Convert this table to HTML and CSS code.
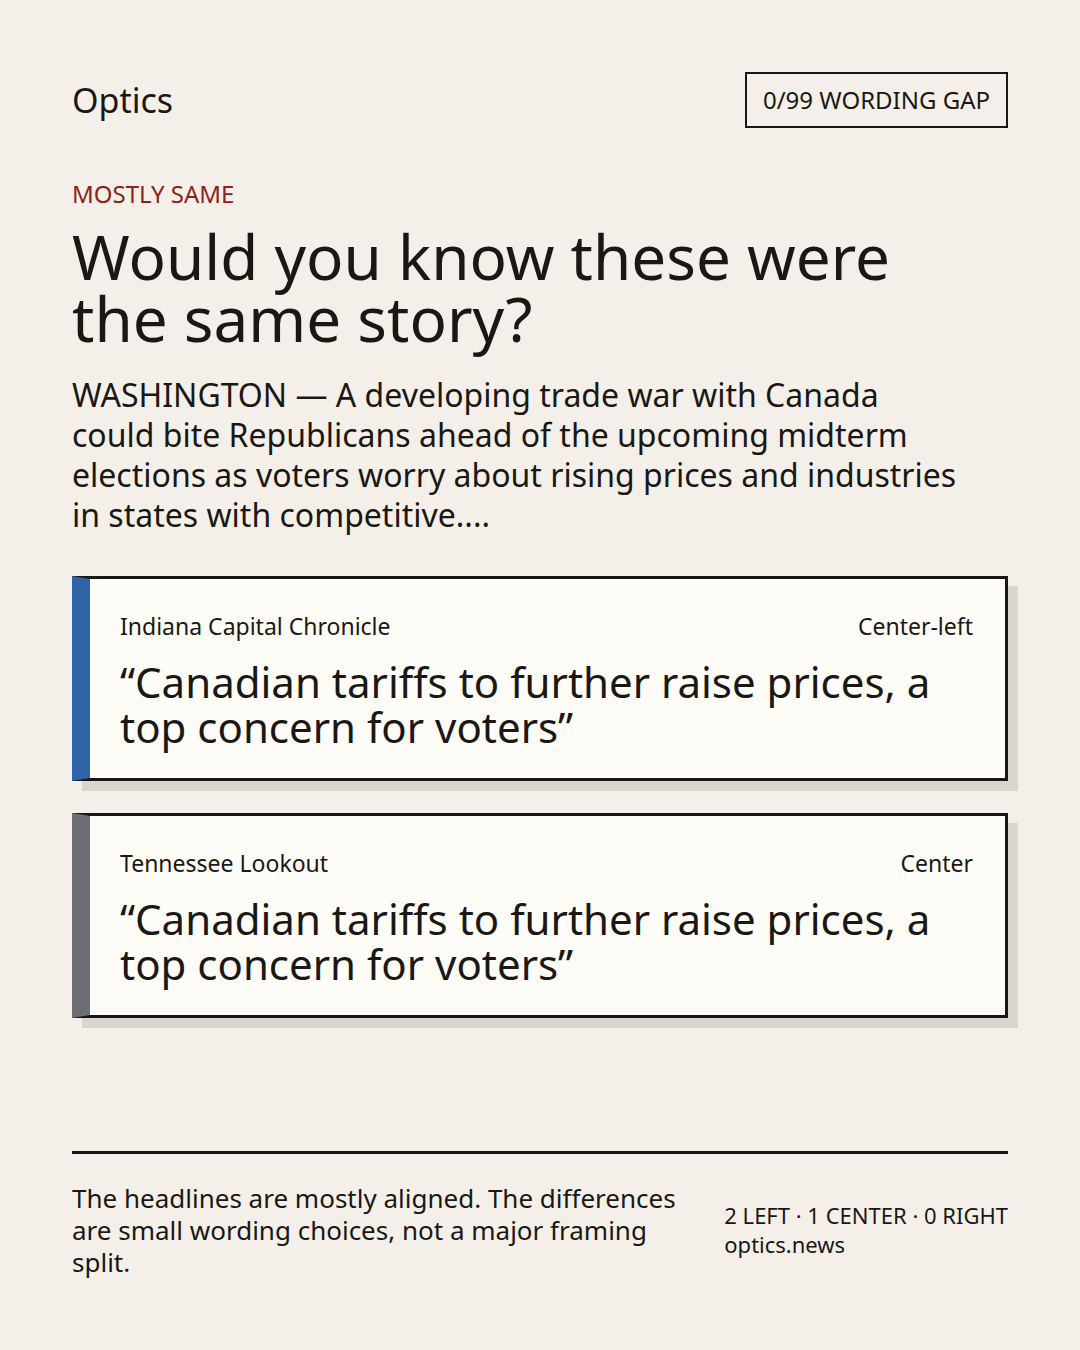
FILE: index.html
```html
<!DOCTYPE html>
<html lang="en">
<head>
<meta charset="utf-8">
<title>Optics</title>
<link rel="stylesheet" href="styles.css">
</head>
<body>
<div class="page">
  <header class="top">
    <div class="brand">Optics</div>
    <div class="badge">0/99 WORDING GAP</div>
  </header>
  <div class="kicker">MOSTLY SAME</div>
  <h1 class="title">Would you know these were the same story?</h1>
  <p class="lede">WASHINGTON — A developing trade war with Canada could bite Republicans ahead of the upcoming midterm elections as voters worry about rising prices and industries in states with competitive....</p>
  <div class="cards">
    <article class="card card-left">
      <div class="card-meta">
        <span>Indiana Capital Chronicle</span>
        <span>Center-left</span>
      </div>
      <h2 class="card-head">“Canadian tariffs to further raise prices, a top concern for voters”</h2>
    </article>
    <article class="card card-center">
      <div class="card-meta">
        <span>Tennessee Lookout</span>
        <span>Center</span>
      </div>
      <h2 class="card-head">“Canadian tariffs to further raise prices, a top concern for voters”</h2>
    </article>
  </div>
  <footer class="foot">
    <p class="foot-note">The headlines are mostly aligned. The differences are small wording choices, not a major framing split.</p>
    <div class="foot-meta">
      <div>2 LEFT · 1 CENTER · 0 RIGHT</div>
      <div>optics.news</div>
    </div>
  </footer>
</div>
</body>
</html>
```

FILE: styles.css
```css
* { box-sizing: border-box; }
html, body { margin: 0; padding: 0; }
body {
  background: #f4f0e9;
  color: #1a1714;
  font-family: "Noto Sans", "Open Sans", sans-serif;
}
.page {
  min-height: 1350px;
  padding: 72px 72px 72px;
  display: flex;
  flex-direction: column;
}
.top {
  display: flex;
  justify-content: space-between;
  align-items: center;
}
.brand {
  font-size: 34px;
  line-height: 40px;
}
.badge {
  border: 2px solid #1a1714;
  font-size: 24px;
  line-height: 32px;
  padding: 10px 16px;
}
.kicker {
  margin-top: 51px;
  color: #8b2220;
  font-size: 24px;
  line-height: 30px;
}
.title {
  margin: 16px 0 0;
  font-weight: 400;
  font-size: 62px;
  line-height: 62px;
  max-width: 890px;
}
.lede {
  margin: 26px 0 0;
  font-size: 32px;
  line-height: 40px;
  max-width: 890px;
}
.cards {
  margin-top: 41px;
  display: flex;
  flex-direction: column;
  gap: 32px;
}
.card {
  background: #fdfcf7;
  border: 3px solid #1a1714;
  border-left-width: 18px;
  box-shadow: 10px 10px 0 #dad6cf;
  padding: 32px 32px 29px 30px;
}
.card-left { border-left-color: #2f65a8; }
.card-center { border-left-color: #6c6f74; }
.card-meta {
  display: flex;
  justify-content: space-between;
  font-size: 23px;
  line-height: 30px;
}
.card-head {
  margin: 18px 0 0;
  font-weight: 400;
  font-size: 42px;
  line-height: 45px;
}
.foot {
  margin-top: auto;
  border-top: 3px solid #1a1714;
  padding-top: 28px;
  display: grid;
  grid-template-columns: 1fr auto;
  gap: 40px;
  align-items: center;
}
.foot-note {
  margin: 0;
  font-size: 26px;
  line-height: 32px;
}
.foot-meta {
  font-size: 22px;
  line-height: 29px;
}
```
